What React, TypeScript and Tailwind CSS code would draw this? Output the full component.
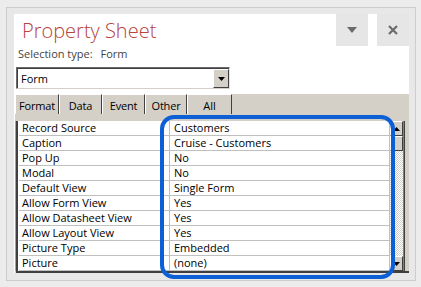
import React from "react";

const rows: [string, string][] = [
  ["Record Source", "Customers"],
  ["Caption", "Cruise - Customers"],
  ["Pop Up", "No"],
  ["Modal", "No"],
  ["Default View", "Single Form"],
  ["Allow Form View", "Yes"],
  ["Allow Datasheet View", "Yes"],
  ["Allow Layout View", "Yes"],
  ["Picture Type", "Embedded"],
  ["Picture", "(none)"],
];

const tabs: { label: string; w: string }[] = [
  { label: "Format", w: "w-[44px]" },
  { label: "Data", w: "w-[43px]" },
  { label: "Event", w: "w-[43px]" },
  { label: "Other", w: "w-[42px]" },
];

function SmallTri({ up = false }: { up?: boolean }) {
  return (
    <svg width="7" height="4" viewBox="0 0 7 4">
      {up ? <polygon points="0,4 7,4 3.5,0" fill="#000" /> : <polygon points="0,0 7,0 3.5,4" fill="#000" />}
    </svg>
  );
}

export default function App() {
  return (
    <div className="w-[421px] h-[287px] bg-[#ececec] pt-[7px] pl-[6px] pr-[5px] pb-[6px] font-['Open_Sans',sans-serif] relative overflow-hidden">
      <div className="h-full border border-[#cdcdcd] bg-[#e8e8e8] pt-[6px] pl-[7px] pr-[6px] pb-[7px]">
        <div className="h-full bg-white flex flex-col">
          {/* header */}
          <div className="h-[32px] flex shrink-0">
            <div className="flex-1 pl-[8px] pt-[7px] text-[20px] leading-[20px] text-[#b8413c] font-light">
              Property Sheet
            </div>
            <div className="w-[32px] h-[32px] bg-[#e6e6e6] flex items-center justify-center">
              <svg width="10" height="6" viewBox="0 0 10 6">
                <polygon points="0,0 10,0 5,6" fill="#6b6b6b" />
              </svg>
            </div>
            <div className="w-[9px]" />
            <div className="w-[32px] h-[32px] bg-[#e6e6e6] flex items-center justify-center">
              <svg width="10" height="10" viewBox="0 0 10 10">
                <path d="M1 1 L9 9 M9 1 L1 9" stroke="#6b6b6b" strokeWidth="2.2" />
              </svg>
            </div>
          </div>
          {/* selection type */}
          <div className="pl-[4px] h-[15px] text-[11px] leading-[15px] text-[#444] flex shrink-0">
            <span>Selection type:</span>
            <span className="ml-[8px]">Form</span>
          </div>
          {/* combo */}
          <div className="mt-[6px] ml-[2px] w-[214px] h-[22px] border-t border-l border-t-[#6a6a6a] border-l-[#6a6a6a] border-r border-b border-r-[#e4e4e4] border-b-[#d4d0c8] flex shrink-0">
            <div className="flex-1 border-t border-l border-[#404040] flex items-center pl-[3px] text-[11px] leading-[15px] text-black">
              Form
            </div>
            <div className="w-[16px] border-t border-[#404040] bg-white flex">
              <div className="w-[16px] h-[19px] bg-[#d4d0c8] border-t border-l border-white border-r border-b border-r-[#404040] border-b-[#404040] flex items-center justify-center">
                <SmallTri />
              </div>
            </div>
          </div>
          {/* tab control */}
          <div className="mt-[5px] ml-[1px] flex-1 flex flex-col bg-[#d4d0c8]">
            <div className="h-[20px] flex shrink-0">
              {tabs.map((t) => (
                <div
                  key={t.label}
                  className={`${t.w} h-[20px] border-t border-l border-t-white border-l-white border-r border-r-[#404040] pt-[3px] text-[11px] leading-[15px] text-black text-center tracking-[-0.2px]`}
                >
                  {t.label}
                </div>
              ))}
              <div className="w-[45px] h-[20px] border-t border-l border-t-white border-l-white border-r border-r-[#404040] pt-[3px] text-[11px] leading-[15px] text-black text-center">
                All
              </div>
              <div className="flex-1" />
            </div>
            <div className="flex-1 flex flex-col pt-[7px]">
              <div className="flex flex-1">
                <div className="w-[1px] bg-[#a0a0a0]" />
                <div className="w-[2px] bg-[#404040]" />
                <div className="w-[1px] bg-white" />
                <div className="w-[370px] flex flex-col bg-white">
                  {rows.map(([k, v]) => (
                    <div key={k} className="h-[15px] flex border-b border-[#c0c0c0]">
                      <div className="w-[151px] pl-[3px] text-[11px] leading-[14px] text-black border-r border-[#c0c0c0] whitespace-nowrap">
                        {k}
                      </div>
                      <div className="flex-1 pl-[4px] text-[11px] leading-[14px] text-black whitespace-nowrap">
                        {v}
                      </div>
                    </div>
                  ))}
                </div>
                <div className="w-[1px] bg-[#c0c0c0]" />
                <div className="w-[13px] flex flex-col">
                  <div className="h-[15px] bg-[#d4d0c8] border-t border-l border-white border-r border-b border-r-[#404040] border-b-[#404040] flex items-center justify-center">
                    <SmallTri up />
                  </div>
                  <div className="h-[15px] bg-[#d4d0c8] border-t border-l border-white border-r border-b border-r-[#404040] border-b-[#404040]" />
                  <div className="flex-1 bg-[repeating-conic-gradient(#d4d0c8_0%_25%,#ffffff_0%_50%)] bg-[length:2px_2px]" />
                  <div className="h-[15px] bg-[#d4d0c8] border-t border-l border-white border-r border-b border-r-[#404040] border-b-[#404040] flex items-center justify-center">
                    <SmallTri />
                  </div>
                </div>
                <div className="w-[1px] bg-[#808080]" />
                <div className="w-[1px] bg-[#404040]" />
                <div className="flex-1" />
              </div>
              <div className="h-[2px] bg-[#404040] ml-[1px]" />
            </div>
          </div>
        </div>
      </div>
      {/* annotation */}
      <div className="absolute left-[160px] top-[115px] w-[235px] h-[164px] border-[4px] border-[#0d5fd6] rounded-[14px] pointer-events-none" />
    </div>
  );
}
